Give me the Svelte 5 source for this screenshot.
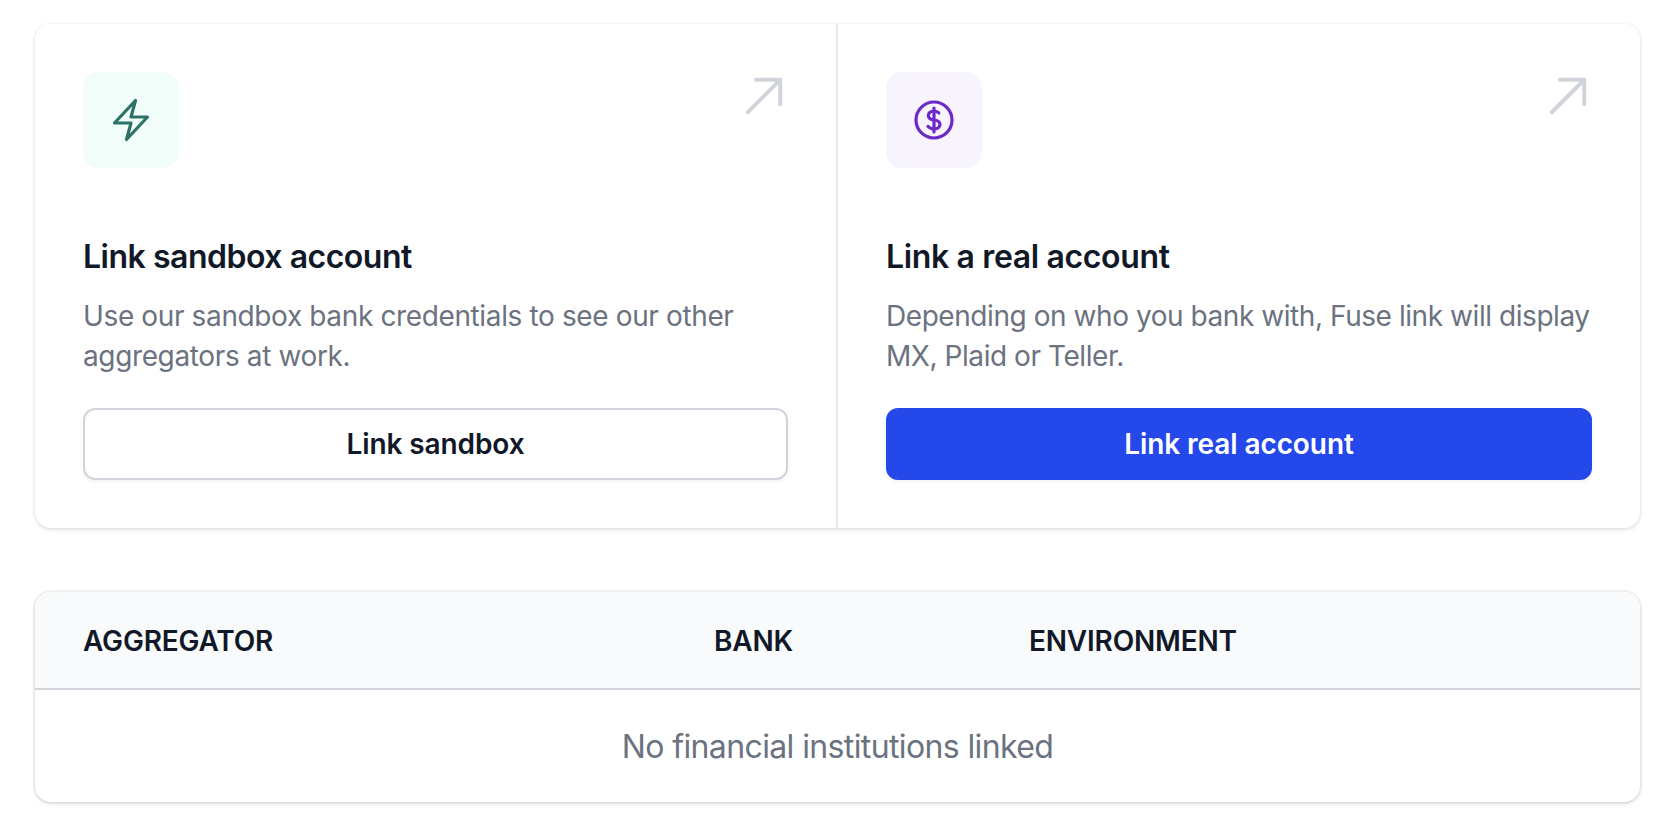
<script>
  const actions = [
    {
      title: 'Link sandbox account',
      text: 'Use our sandbox bank credentials to see our other aggregators at work.',
      button: 'Link sandbox',
      kind: 'teal',
      primary: false
    },
    {
      title: 'Link a real account',
      text: 'Depending on who you bank with, Fuse link will display MX, Plaid or Teller.',
      button: 'Link real account',
      kind: 'violet',
      primary: true
    }
  ];
</script>

<main class="page">
  <section class="actions">
    {#each actions as a}
      <div class="action">
        <svg class="arrow" viewBox="0 0 24 24" fill="none" stroke="currentColor" stroke-width="1.85" stroke-linecap="round" stroke-linejoin="round">
          <path d="M4.5 19.5l15-15m0 0H8.25m11.25 0v11.25" />
        </svg>
        <div class="icon {a.kind}">
          <svg viewBox="0 0 24 24" fill="none" stroke="currentColor" stroke-width="1.6" stroke-linecap="round" stroke-linejoin="round">
            {#if a.kind === 'teal'}
              <path d="M3.75 13.5l10.5-11.25L12 10.5h8.25L9.75 21.75 12 13.5H3.75z" />
            {:else}
              <path d="M12 6v12m-3-2.818l.879.659c1.171.879 3.07.879 4.242 0 1.172-.879 1.172-2.303 0-3.182C13.536 12.219 12.768 12 12 12c-.725 0-1.45-.22-2.003-.659-1.106-.879-1.106-2.303 0-3.182s2.9-.879 4.006 0l.415.33M21 12a9 9 0 11-18 0 9 9 0 0118 0z" />
            {/if}
          </svg>
        </div>
        <h3>{a.title}</h3>
        <p>{a.text}</p>
        <button class:primary={a.primary}>{a.button}</button>
      </div>
    {/each}
  </section>

  <section class="table">
    <div class="thead">
      <span>AGGREGATOR</span>
      <span>BANK</span>
      <span>ENVIRONMENT</span>
    </div>
    <div class="empty">No financial institutions linked</div>
  </section>
</main>

<style>
  :global(body) {
    margin: 0;
    background: #fff;
    font-family: Inter, "Liberation Sans", sans-serif;
  }
  .page {
    box-sizing: border-box;
    width: 1674px;
    height: 840px;
    padding: 24px 34px 0 35px;
    display: flex;
    flex-direction: column;
    gap: 64px;
  }
  .actions {
    display: grid;
    grid-template-columns: 803px 1fr;
    background: #fff;
    border-radius: 16px;
    box-shadow: 0 2px 4px rgba(0, 0, 0, 0.1), 0 0 0 2px rgba(0, 0, 0, 0.02);
    overflow: hidden;
  }
  .action {
    position: relative;
    box-sizing: border-box;
    padding: 48px;
    height: 504px;
    display: flex;
    flex-direction: column;
  }
  .action:first-child {
    border-right: 2px solid #e5e7eb;
  }
  .arrow {
    position: absolute;
    top: 46px;
    right: 46px;
    width: 52px;
    height: 52px;
    color: #d1d5db;
  }
  .icon {
    width: 96px;
    height: 96px;
    border-radius: 16px;
    display: flex;
    align-items: center;
    justify-content: center;
  }
  .icon svg {
    width: 48px;
    height: 48px;
  }
  .teal {
    background: #f0fdf9;
    color: #2d7268;
  }
  .violet {
    background: #f7f4fe;
    color: #6d28c9;
  }
  h3 {
    margin: 65px 0 0;
    font-size: 32px;
    line-height: 48px;
    font-weight: 600;
    letter-spacing: -0.48px;
    color: #111827;
  }
  .action:last-child h3 {
    letter-spacing: -0.36px;
  }
  p {
    margin: 15px 0 0;
    font-size: 28px;
    line-height: 40px;
    letter-spacing: -0.37px;
    color: #6b7280;
  }
  .action:last-child p {
    letter-spacing: -0.44px;
  }
  button {
    margin-top: 32px;
    height: 72px;
    border: 2px solid #d1d5db;
    border-radius: 12px;
    background: #fff;
    color: #111827;
    font: 600 28px/40px Inter, "Liberation Sans", sans-serif;
    letter-spacing: -0.09px;
    box-shadow: 0 2px 4px rgba(0, 0, 0, 0.05);
  }
  button.primary {
    background: #2548ea;
    border-color: #2548ea;
    color: #fff;
  }
  .table {
    border-radius: 16px;
    overflow: hidden;
    box-shadow: 0 2px 4px rgba(0, 0, 0, 0.1), 0 0 0 2px rgba(0, 0, 0, 0.05);
  }
  .thead {
    box-sizing: border-box;
    display: grid;
    grid-template-columns: 631px 315px 1fr;
    align-items: center;
    height: 98px;
    padding: 2px 48px 0;
    background: #f9fafb;
    border-bottom: 2px solid #d1d5db;
    font-size: 28px;
    font-weight: 600;
    letter-spacing: -0.18px;
    color: #111827;
  }
  .empty {
    height: 112px;
    display: flex;
    align-items: center;
    justify-content: center;
    font-size: 32px;
    letter-spacing: -0.62px;
    color: #6b7280;
  }
</style>
